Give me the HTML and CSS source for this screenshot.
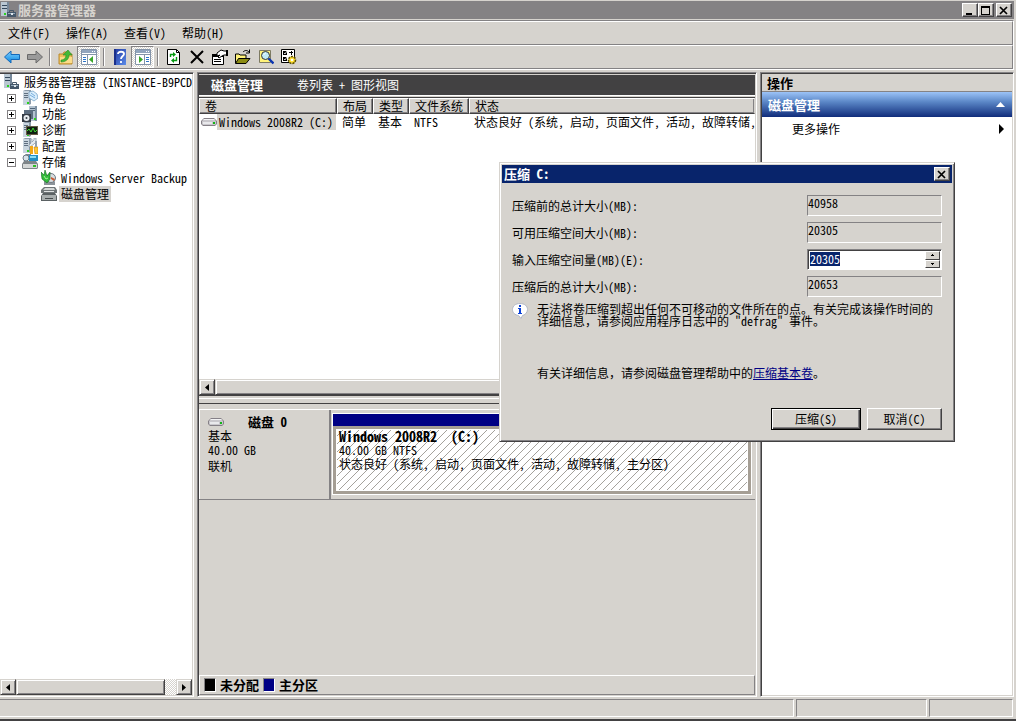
FILE: index.html
```html
<!DOCTYPE html>
<html lang="zh-CN">
<head>
<meta charset="utf-8">
<title>服务器管理器</title>
<link rel="stylesheet" href="styles.css">
</head>
<body>
<svg class="defs" aria-hidden="true">
  <defs>
    <linearGradient id="g-blue" x1="0" y1="0" x2="0" y2="1"><stop offset="0" stop-color="#7fd0ff"/><stop offset="1" stop-color="#0a86e0"/></linearGradient>
    <linearGradient id="g-help" x1="0" y1="0" x2="1" y2="1"><stop offset="0" stop-color="#2138a0"/><stop offset="1" stop-color="#5b8be8"/></linearGradient>
    <symbol id="tower" viewBox="0 0 16 16">
      <path d="M1 1l2-1h6v14l-2 1H1z" fill="#8d9cab"/><path d="M1 1h6v14H1z" fill="#c9d5df"/>
      <path d="M2 3.500h4M2 5.500h4M2 7.500h4" stroke="#5f6f80"/><path d="M5 12h2v2H5z" fill="#29d21d"/>
    </symbol>
    <symbol id="server" viewBox="0 0 16 16">
      <path d="M1 0h7v14H1z" fill="#b9c7d2"/><path d="M7 0h2v14H7z" fill="#76889a"/>
      <path d="M2 3.500h5M2 6.500h5" stroke="#33475b"/><path d="M4 11h2v2H4z" fill="#29d21d"/>
      <path d="M7 10h9v5H7z" fill="#45586b"/><path d="M8 11h7v1H8z" fill="#93a9bb"/><path d="M9.500 10V8.500h4V10" fill="none" stroke="#45586b"/><path d="M11 11h2v2h-2z" fill="#dde6ec"/>
    </symbol>
    <symbol id="roles" viewBox="0 0 16 16">
      <use href="#tower"/><path d="M7 2l4-1 4 3 1 4-4 3-5-3z" fill="#d8edfb" stroke="#6d9cc2" stroke-width=".7"/><path d="M9 3l4 3M8 5l5 3" stroke="#77aede"/>
    </symbol>
    <symbol id="features" viewBox="0 0 16 16">
      <path d="M7 0h8v15H7z" fill="#b4c3d0"/><path d="M8 2.500h5M8 4.500h5" stroke="#506478"/><path d="M13 0h2v15h-2z" fill="#7e91a3"/>
      <path d="M2 4h9v9H2z" fill="#5d6e80"/><path d="M0 8h9v8H0z" fill="#343c46"/><circle cx="4.500" cy="12" r="3" fill="#e9eef2"/><circle cx="4.500" cy="12" r="1" fill="#343c46"/><path d="M12 12h2v2h-2z" fill="#29d21d"/>
    </symbol>
    <symbol id="diag" viewBox="0 0 16 16">
      <use href="#tower"/><path d="M4 4h12v9H4z" fill="#665c47"/><path d="M5 5h10v7H5z" fill="#102012"/><path d="M5 9l2-2 2 3 2-4 2 4 2-2" fill="none" stroke="#3ed632"/>
    </symbol>
    <symbol id="config" viewBox="0 0 16 16">
      <use href="#tower"/><path d="M8 1h2v3l2-2V0h2v4l-2 2-4 3H7V7l2-2z" fill="#e5ebef" stroke="#8293a2" stroke-width=".7"/><path d="M8 8h3v8H8z" fill="#f3a817"/><path d="M12 9h4v7h-3z" fill="#ffc82e" stroke="#c87d0a" stroke-width=".6"/><path d="M13 3h2v6h-2z" fill="#93a1ad"/>
    </symbol>
    <symbol id="storage" viewBox="0 0 16 16">
      <path d="M1 3l3-3h5v6H1z" fill="#7c8792"/><circle cx="4" cy="4" r="3" fill="#d7e2e9" stroke="#6b7984"/><path d="M7 1h9v6H7z" fill="#248fc4"/><path d="M8 2h6v2H8z" fill="#8cdcf6"/>
      <path d="M2 7h12l2 3v4l-1 1H1l-1-1v-4z" fill="#7e8588"/><path d="M1 10h14v4H1z" fill="#d4d7d6"/><path d="M11 11h3v2h-3z" fill="#2fc027"/>
    </symbol>
    <symbol id="backup" viewBox="0 0 16 16">
      <path d="M3 10h10l1 2v3H3z" fill="#8c9399"/><circle cx="10" cy="8" r="4.500" fill="#d7dde1" stroke="#6e7881"/><path d="M10 7l4 2-1 2-3-2z" fill="#c85b34"/>
      <path d="M0 2l3 3 1-5 2 6 3-4v7l-3 4-5-4z" fill="#31bd3a" stroke="#126c22" stroke-width=".6"/><path d="M3 6l2 3 2-1" fill="none" stroke="#a5f39a"/>
    </symbol>
    <symbol id="disks" viewBox="0 0 16 16">
      <path d="M3 1h11l2 3v3H0V4z" fill="#6f7577"/><path d="M4 2h9l1 2H2z" fill="#d3d6d6"/><path d="M2 7h12l2 3v5H0v-5z" fill="#5b6163"/><path d="M1 9h14v5H1z" fill="#a9aeae"/><path d="M3 5h10v1H3z" fill="#e1e3e3"/><path d="M4 12.500h8" stroke="#454a4c"/>
    </symbol>
    <symbol id="drive" viewBox="0 0 16 8">
      <path d="M3 0h10l3 3v3l-2 2H2L0 6V3z" fill="#858087"/><path d="M3 1h10l2 2v3l-1 1H2L1 6V3z" fill="#c9c7cc"/><path d="M3 1h10l1 1H2z" fill="#f3f3f4"/><path d="M2 4h9v2H2z" fill="#e9e9ec"/><path d="M12 4h2v2h-2z" fill="#12b616"/>
    </symbol>
    <symbol id="console" viewBox="0 0 16 16">
      <path d="M0 0h16v16H0z" fill="#fff"/><path d="M.5.5h15v15H.5z" fill="none" stroke="#8494a9"/><path d="M1 1h14v3H1z" fill="#91a4bd"/><path d="M11 2.500h1M13 2.500h1" stroke="#fff"/><path d="M1 5.500h14" stroke="#8494a9"/>
    </symbol>
    <symbol id="tri" viewBox="0 0 4 7"><path d="M4 0v7L0 3.500z"/></symbol>
  </defs>
</svg>

<div class="window">
  <header class="titlebar">
    <svg class="ico"><use href="#server"/></svg>
    <h1 class="titlebar-text">服务器管理器</h1>
    <div class="caption">
      <button class="cap" aria-label="最小化"><svg width="10" height="9"><path d="M1 7h6v2H1z"/></svg></button>
      <button class="cap" aria-label="最大化"><svg width="10" height="9"><path d="M0 0h9v9H0zM1 2v6h7V2z" fill-rule="evenodd"/></svg></button>
      <button class="cap cap-close" aria-label="关闭"><svg width="10" height="9"><path d="M1 1l7 7M8 1L1 8" stroke="#000" stroke-width="1.700"/></svg></button>
    </div>
  </header>

  <div class="bars">
    <nav class="menubar">
      <button class="menu">文件(F)</button><button class="menu">操作(A)</button><button class="menu">查看(V)</button><button class="menu">帮助(H)</button>
    </nav>
    <div class="toolbar">
      <button class="tool" aria-label="后退"><svg class="ico" viewBox="0 0 16 16"><path d="M.5 8L7 2v3.500h8.500v5H7V14z" fill="url(#g-blue)" stroke="#1668b8"/></svg></button>
      <button class="tool" aria-label="前进"><svg class="ico" viewBox="0 0 16 16"><path d="M15.500 8L9 2v3.500H.5v5H9V14z" fill="#9a9a9a" stroke="#6a6a6a"/></svg></button>
      <span class="sep"></span>
      <button class="tool" aria-label="上一级"><svg class="ico" viewBox="0 0 16 16"><path d="M1 5h4l1-2h4l1 2h3v10H1z" fill="#f0c15c" stroke="#b98a2c"/><path d="M2 8h12v6H2z" fill="#fbdc8a"/><path d="M3 11c3 0 5-2 5-5H5l5-5 4 5h-3c0 4-3 7-8 7z" fill="#43b936" stroke="#2a8a26" stroke-width=".6"/></svg></button>
      <button class="tool tool-on" aria-label="显示/隐藏控制台树"><svg class="ico" viewBox="0 0 16 16"><use href="#console"/><path d="M6.500 6v9" stroke="#8494a9"/><path d="M2 8.500h3M2 10.500h3M2 12.500h3" stroke="#2d74c9"/><path d="M12 7v7l-4-3.500z" fill="#3aa62a"/></svg></button>
      <span class="sep"></span>
      <button class="tool" aria-label="帮助"><svg class="ico" viewBox="0 0 16 16"><path d="M2 0h12v16H2z" fill="url(#g-help)"/><path d="M2 0h2v16H2z" fill="#1b2f8a"/><path d="M6 5c0-3 6-3 6 0 0 2-3 2-3 5M9 12v2" fill="none" stroke="#fff" stroke-width="1.800"/></svg></button>
      <button class="tool tool-on" aria-label="显示/隐藏操作窗格"><svg class="ico" viewBox="0 0 16 16"><use href="#console"/><path d="M9.500 6v9" stroke="#8494a9"/><path d="M11 8.500h3M11 10.500h3M11 12.500h3" stroke="#2d74c9"/><path d="M4 7v7l4-3.500z" fill="#3aa62a"/></svg></button>
      <span class="sep"></span>
      <button class="tool" aria-label="刷新"><svg class="ico" viewBox="0 0 16 16"><path d="M1.500.5h9l3 3v12h-12z" fill="#fff" stroke="#000"/><path d="M10.500.5v3h3" fill="none" stroke="#000"/><path d="M4.500 8V5.500H8M10.500 8v3.500H7" fill="none" stroke="#079a12" stroke-width="1.400"/><path d="M7 3l3 2.500L7 8zM8 9l-3 2.500L8 14z" fill="#079a12"/></svg></button>
      <button class="tool" aria-label="删除"><svg class="ico" viewBox="0 0 16 16"><path d="M2 2l12 12M14 2L2 14" stroke="#000" stroke-width="2"/></svg></button>
      <button class="tool" aria-label="属性"><svg class="ico" viewBox="0 0 16 16"><path d="M.5 5.500h11v10H.5z" fill="#fff" stroke="#000"/><path d="M0 5h12v3H0z"/><path d="M2 10.500h7M2 12.500h7" stroke="#000"/><path d="M5 4l4-3 3 1h3v4h-3l-2 1-3 2-1-1 2-2-3 1z" fill="#fff" stroke="#000"/><path d="M14 1h2v6h-2z"/></svg></button>
      <button class="tool" aria-label="打开"><svg class="ico" viewBox="0 0 16 16"><path d="M.5 14V5H4l1 1h6v3" fill="#fff27a" stroke="#000"/><path d="M.5 14.500l3-5H15l-4 5z" fill="#8b8b12" stroke="#000"/><path d="M8 3c2-2 4-2 6 0M14.500.5V4H11" fill="none" stroke="#000"/></svg></button>
      <button class="tool" aria-label="重新扫描"><svg class="ico" viewBox="0 0 16 16"><path d="M1.500 1.500h11v12h-11z" fill="#fff27a" stroke="#7d7a62"/><circle cx="7.500" cy="6.500" r="4" fill="#bfeaf6" stroke="#333"/><path d="M5.500 6l2-2" stroke="#fff"/><path d="M10.500 9.500l5 5" stroke="#0b35b0" stroke-width="2.400"/></svg></button>
      <button class="tool" aria-label="设置"><svg class="ico" viewBox="0 0 16 16"><path d="M.5.5h13v13H.5z" fill="#fff" stroke="#000"/><path d="M2 2h4v4H2zM2 8h4v4H2z"/><path d="M3 4l1 1 2-3M3 10l1 1 2-3" stroke="#fff" fill="none" stroke-width=".8"/><path d="M8 3.500h4M10.500 2v4" stroke="#000"/><circle cx="11" cy="11" r="3.500" fill="#ffdf2e" stroke="#5a4c00" stroke-dasharray="2 1" stroke-width="1.600"/><circle cx="11" cy="11" r="1.300" fill="#fff"/></svg></button>
    </div>
  </div>

  <main class="panes">
    <aside class="pane pane-tree">
      <ul class="tree">
        <li class="node node-root"><svg class="ico"><use href="#server"/></svg><span class="node-text">服务器管理器 (INSTANCE-B9PCD</span></li>
        <li class="node"><button class="toggle toggle-plus" aria-label="展开"></button><svg class="ico"><use href="#roles"/></svg><span class="node-text">角色</span></li>
        <li class="node"><button class="toggle toggle-plus" aria-label="展开"></button><svg class="ico"><use href="#features"/></svg><span class="node-text">功能</span></li>
        <li class="node"><button class="toggle toggle-plus" aria-label="展开"></button><svg class="ico"><use href="#diag"/></svg><span class="node-text">诊断</span></li>
        <li class="node"><button class="toggle toggle-plus" aria-label="展开"></button><svg class="ico"><use href="#config"/></svg><span class="node-text">配置</span></li>
        <li class="node"><button class="toggle" aria-label="折叠"></button><svg class="ico"><use href="#storage"/></svg><span class="node-text">存储</span></li>
        <li class="node node-leaf"><svg class="ico"><use href="#backup"/></svg><span class="node-text">Windows Server Backup</span></li>
        <li class="node node-leaf"><svg class="ico"><use href="#disks"/></svg><span class="node-text node-selected">磁盘管理</span></li>
      </ul>
      <div class="scroll">
        <button class="scroll-btn" aria-label="向左"><svg width="4" height="7"><use href="#tri"/></svg></button>
        <div class="scroll-thumb scroll-thumb-tree"></div>
        <button class="scroll-btn scroll-end" aria-label="向右"><svg class="flip" width="4" height="7"><use href="#tri"/></svg></button>
      </div>
    </aside>

    <section class="pane pane-center">
      <div class="view-head"><h2 class="bold">磁盘管理</h2><span>卷列表 + 图形视图</span></div>
      <div class="volumes">
        <table class="vol-table">
          <colgroup><col class="c-vol"><col class="c-short"><col class="c-short"><col class="c-fs"><col></colgroup>
          <thead><tr><th>卷</th><th>布局</th><th>类型</th><th>文件系统</th><th>状态</th></tr></thead>
          <tbody><tr>
            <td class="vol-name"><div class="vol-cell"><svg class="drive"><use href="#drive"/></svg><span class="vol-label">Windows 2008R2 (C:)</span></div></td>
            <td>简单</td><td>基本</td><td>NTFS</td><td>状态良好 (系统, 启动, 页面文件, 活动, 故障转储,</td>
          </tr></tbody>
        </table>
        <div class="scroll scroll-list">
          <button class="scroll-btn" aria-label="向左"><svg width="4" height="7"><use href="#tri"/></svg></button>
          <div class="scroll-thumb scroll-thumb-full"></div>
        </div>
      </div>
      <div class="splitter"></div>
      <div class="graph">
        <div class="disk">
          <div class="disk-info">
            <div class="disk-title"><svg class="drive"><use href="#drive"/></svg><b class="bold">磁盘 0</b></div>
            <div>基本</div><div>40.00 GB</div><div class="disk-state">联机</div>
          </div>
          <div class="partition">
            <div class="part-bar"></div>
            <div class="part-body">
              <b class="part-name">Windows 2008R2&nbsp; (C:)</b>
              <div>40.00 GB NTFS</div>
              <div>状态良好 (系统, 启动, 页面文件, 活动, 故障转储, 主分区)</div>
            </div>
          </div>
        </div>
        <div class="legend bold">
          <span class="swatch swatch-black"></span><span class="legend-text">未分配</span>
          <span class="swatch swatch-navy"></span><span class="legend-text">主分区</span>
        </div>
      </div>
    </section>

    <aside class="pane pane-actions">
      <h2 class="act-head bold">操作</h2>
      <button class="act-group bold">磁盘管理<svg width="9" height="5"><path d="M4.500 0L9 5H0z" fill="#fff"/></svg></button>
      <button class="act-item">更多操作<svg width="5" height="10"><path d="M0 0l5 5-5 5z"/></svg></button>
    </aside>
  </main>

  <footer class="status"><div class="cell cell-main"></div><div class="cell cell-mid"></div><div class="cell cell-last"></div></footer>
</div>

<form class="dialog" role="dialog" aria-labelledby="dlg-title">
  <div class="dlg-title"><h2 class="bold" id="dlg-title">压缩 C:</h2><button type="button" class="cap" aria-label="关闭"><svg width="10" height="9"><path d="M1 1l7 7M8 1L1 8" stroke="#000" stroke-width="1.700"/></svg></button></div>
  <div class="dlg-body">
    <div class="fields">
      <label for="f1">压缩前的总计大小(MB):</label><input class="field" id="f1" readonly value="40958">
      <label for="f2">可用压缩空间大小(MB):</label><input class="field" id="f2" readonly value="20305">
      <label for="f3">输入压缩空间量(MB)(E):</label>
      <div class="spin"><input class="spin-input" id="f3" value="20305">
        <div class="spin-btns"><button type="button" class="spin-btn" aria-label="增加"><svg width="3" height="2"><path d="M1 0h1v1h1v1H0V1h1z"/></svg></button><button type="button" class="spin-btn" aria-label="减少"><svg width="3" height="2"><path d="M0 0h3v1H2v1H1V1H0z"/></svg></button></div>
      </div>
      <label for="f4">压缩后的总计大小(MB):</label><input class="field" id="f4" readonly value="20653">
    </div>
    <div class="info">
      <svg width="16" height="16" viewBox="0 0 16 16"><path d="M8 .5c4.500 0 7.500 2.500 7.500 6S12.500 12 10.500 12.500L9 15.500 6.500 12.500C3 12 .5 10 .5 6.500S3.500.5 8 .5z" fill="#fff" stroke="#b4b8c4"/><path d="M7 2h2v2H7zM6 5h3v5h1v1H6v-1h1V6H6z" fill="#0c41d8"/></svg>
      <p class="info-text">无法将卷压缩到超出任何不可移动的文件所在的点。有关完成该操作时间的<br>详细信息，请参阅应用程序日志中的<span class="half"> "defrag" </span>事件。</p>
    </div>
    <p class="more">有关详细信息，请参阅磁盘管理帮助中的<a class="link" href="#">压缩基本卷</a>。</p>
    <div class="buttons"><button type="button" class="btn btn-default">压缩(S)</button><button type="button" class="btn btn-cancel">取消(C)</button></div>
  </div>
</form>
<script src="app.js"></script>
</body>
</html>
```
FILE: styles.css
```css
:root {
  --face: #d6d3ce;
  --shade: #848284;
  --dark: #424142;
  --navy: #08246b;
}
* { box-sizing: border-box; }
body {
  margin: 0;
  background: var(--face);
  color: #000;
  font: 12px/16px "Noto Sans CJK SC", sans-serif;
  font-feature-settings: "hwid";
}
h1, h2, p, ul { margin: 0; padding: 0; font: inherit; font-feature-settings: inherit; }
button, input {
  font: inherit;
  font-feature-settings: inherit;
  color: inherit;
  margin: 0;
  padding: 0;
  border: 0;
  border-radius: 0;
  background: transparent;
}
svg { display: block; flex: none; }
.defs { position: absolute; width: 0; height: 0; }
.ico { width: 16px; height: 16px; }
.bold, h1.titlebar-text { font-weight: 700; font-size: 13px; }

.window {
  display: flex;
  flex-direction: column;
  height: 100vh;
  border-top: 1px solid var(--face);
  border-bottom: 2px solid var(--dark);
}
.titlebar {
  display: flex;
  align-items: center;
  flex: none;
  height: 18px;
  margin-right: 2px;
  background: var(--shade);
  color: var(--face);
}
.titlebar-text { margin-left: 2px; }
.caption { display: flex; margin-left: auto; margin-right: 2px; }
.cap {
  display: flex;
  align-items: center;
  justify-content: center;
  width: 16px;
  height: 14px;
  background: var(--face);
  border: 1px solid;
  border-color: #fff var(--dark) var(--dark) #fff;
  box-shadow: inset -1px -1px var(--shade);
}
.cap-close { margin-left: 2px; }

.bars {
  flex: none;
  margin: 1px 2px 2px 0;
  border: solid;
  border-width: 1px 1px 1px 0;
  border-color: var(--shade) #fff #fff;
}
.menubar {
  display: flex;
  height: 24px;
  border: solid;
  border-width: 1px 1px 1px 0;
  border-color: #fff var(--shade) var(--shade);
}
.menu { padding: 0 8px; }
.toolbar {
  display: flex;
  height: 24px;
  border: solid;
  border-width: 1px 1px 1px 0;
  border-color: #fff var(--shade) var(--shade);
}
.tool { display: flex; align-items: center; justify-content: center; width: 23px; height: 22px; }
.tool-on {
  border: 1px solid;
  border-color: var(--shade) #fff #fff var(--shade);
  background: repeating-conic-gradient(#fff 0 25%, var(--face) 0 50%) 0 0 / 2px 2px;
}
.sep { width: 8px; padding: 2px 3px; }
.sep::before { content: ""; display: block; width: 2px; height: 18px; background: linear-gradient(90deg, var(--shade) 50%, #fff 50%); }

.panes { display: flex; flex: 1; gap: 3px; min-height: 0; margin-right: 2px; }
.pane {
  display: flex;
  flex-direction: column;
  min-width: 0;
  border: 1px solid;
  border-color: var(--shade) #fff #fff var(--shade);
  box-shadow: inset 1px 1px var(--dark), inset -1px -1px var(--face);
  padding: 1px;
}
.pane-tree { flex: none; width: 194px; background: #fff; border-left: 0; padding-left: 0; box-shadow: inset 0 1px var(--dark), inset -1px -1px var(--face); }
.tree { flex: 1; list-style: none; overflow: hidden; }
.node { display: flex; align-items: center; height: 16px; padding-left: 7px; white-space: nowrap; }
.node-root { padding-left: 3px; }
.node-leaf { padding-left: 41px; }
.node-text { margin-left: 2px; padding: 0 2px; }
.node-root .node-text { margin-left: 3px; }
.node-selected { background: var(--face); }
.toggle {
  width: 9px;
  height: 9px;
  margin-right: 6px;
  border: 1px solid var(--shade);
  background: linear-gradient(#000, #000) center / 5px 1px no-repeat;
}
.toggle-plus { background: linear-gradient(#000, #000) center / 5px 1px no-repeat, linear-gradient(#000, #000) center / 1px 5px no-repeat; }

.scroll { display: flex; flex: none; height: 16px; background: repeating-conic-gradient(#fff 0 25%, var(--face) 0 50%) 0 0 / 2px 2px; }
.scroll-btn, .scroll-thumb {
  background: var(--face);
  border: 1px solid;
  border-color: var(--face) var(--dark) var(--dark) var(--face);
  box-shadow: inset 1px 1px #fff, inset -1px -1px var(--shade);
}
.scroll-btn { display: flex; align-items: center; justify-content: center; width: 16px; }
.scroll-thumb-tree { width: 149px; }
.scroll-thumb-full { flex: 1; }
.scroll-end { margin-left: auto; }
.flip { transform: scaleX(-1); }

.pane-center { flex: 1; padding-top: 2px; }
.view-head {
  display: flex;
  align-items: center;
  flex: none;
  gap: 34px;
  height: 21px;
  padding-left: 12px;
  background: var(--dark);
  border-bottom: 1px solid #fff;
  color: #fff;
}
.volumes {
  display: flex;
  flex-direction: column;
  flex: none;
  height: 300px;
  border-top: 1px solid var(--face);
  border-bottom: 1px solid var(--dark);
  background: #fff;
  overflow: hidden;
}
.vol-table { width: 100%; table-layout: fixed; border-collapse: separate; border-spacing: 0; border-top: 1px solid var(--dark); }
.c-vol { width: 138px; }
.c-short { width: 36px; }
.c-fs { width: 60px; }
.vol-table th {
  height: 16px;
  padding: 0 5px;
  background: var(--face);
  border: 1px solid;
  border-color: #fff var(--dark) var(--dark) #fff;
  box-shadow: inset -1px -1px var(--shade);
  font-weight: 400;
  line-height: 14px;
  text-align: left;
  white-space: nowrap;
}
.vol-table th:last-child { border-right-color: var(--face); }
.vol-table td { height: 16px; padding: 0 0 0 5px; white-space: nowrap; overflow: hidden; }
.vol-table .vol-name { padding: 0 1px 0 2px; }
.vol-cell { display: flex; align-items: center; }
.drive { width: 16px; height: 8px; }
.vol-label { flex: 1; padding-left: 2px; background: var(--face); }
.scroll-list { margin-top: auto; }
.splitter { flex: none; height: 8px; border-bottom: 1px solid var(--dark); box-shadow: inset 0 2px var(--face), inset 0 3px #fff; }

.graph { display: flex; flex-direction: column; flex: 1; min-height: 0; padding-top: 5px; }
.disk { display: flex; height: 91px; border-top: 1px solid #fff; border-bottom: 1px solid var(--shade); }
.disk-info {
  flex: none;
  width: 132px;
  padding: 4px 0 0 8px;
  border: solid;
  border-width: 0 2px 0 1px;
  border-color: #fff var(--shade) #fff #fff;
  line-height: 14px;
}
.disk-title { display: flex; align-items: center; gap: 24px; height: 15px; }
.disk-state { line-height: 18px; }
.partition { flex: 1; min-width: 0; display: flex; flex-direction: column; margin: 3px 3px 4px 1px; border: 1px solid #fff; }
.part-bar { height: 12px; background: #000084; }
.part-body {
  flex: 1;
  padding: 0 3px;
  border: 3px solid #a59e94;
  box-shadow: inset 0 0 0 1px #fff;
  background: linear-gradient(135deg, transparent 46%, #a5a29c 46%, #a5a29c 54%, transparent 54%) 0 0 / 8px 8px #fff;
  line-height: 14px;
  white-space: nowrap;
  overflow: hidden;
}
.part-name { display: block; font-size: 14px; }
.legend {
  display: flex;
  align-items: center;
  height: 20px;
  margin-top: auto;
  padding-left: 4px;
  border: 1px solid;
  border-color: #fff var(--shade) var(--shade) #fff;
}
.swatch { width: 12px; height: 14px; border: 1px solid; border-color: var(--shade) #fff #fff var(--shade); }
.swatch-black { background: #000; }
.swatch-navy { background: #000084; }
.legend-text { padding: 0 4px; }

.pane-actions { flex: none; width: 254px; background: #fff; }
.act-head { height: 18px; padding-left: 5px; background: var(--face); border-bottom: 1px solid var(--shade); line-height: 18px; }
.act-group, .act-item { display: flex; align-items: center; justify-content: space-between; text-align: left; }
.act-group { height: 25px; padding: 0 7px 0 6px; background: linear-gradient(#9cc3f7, #5a86c6 40%, #102c7b); color: #fff; }
.act-item { height: 23px; padding: 0 8px 0 30px; }

.status { display: flex; flex: none; gap: 2px; height: 18px; margin: 2px 3px 2px 0; }
.cell { border: 1px solid; border-color: var(--shade) #fff #fff var(--shade); }
.cell-main { flex: 1; border-left: 0; }
.cell-mid { width: 131px; }
.cell-last { width: 84px; }

.dialog {
  position: absolute;
  left: 499px;
  top: 162px;
  width: 456px;
  background: var(--face);
  border: 1px solid;
  border-color: var(--face) var(--dark) var(--dark) var(--face);
  box-shadow: inset 1px 1px #fff, inset -1px -1px var(--shade);
  padding: 2px;
}
.dlg-title { display: flex; align-items: center; justify-content: space-between; height: 18px; padding: 0 2px; background: var(--navy); color: #fff; }
.dlg-title .cap { color: #000; }
.dlg-body { padding: 12px 10px 9px; }
.fields { display: grid; grid-template-columns: 1fr 135px; gap: 6px 0; align-items: center; }
.field {
  width: 100%;
  height: 21px;
  padding-bottom: 7px;
  border: 1px solid;
  border-color: var(--shade) #fff #fff var(--shade);
  line-height: 12px;
}
.spin {
  display: flex;
  height: 21px;
  background: #fff;
  border: 1px solid;
  border-color: var(--shade) #fff #fff var(--shade);
  box-shadow: inset 1px 1px var(--dark);
  padding: 1px;
}
.spin-input { flex: 1; min-width: 0; padding: 0 0 2px 1px; outline: 0; line-height: 14px; }
.spin-input::selection { background: var(--navy); color: #fff; }
.spin-btns { display: flex; flex-direction: column; width: 15px; }
.spin-btn {
  display: flex;
  flex: 1;
  align-items: center;
  justify-content: center;
  background: var(--face);
  border: 1px solid;
  border-color: #fff var(--dark) var(--dark) #fff;
}
.info { display: flex; gap: 9px; height: 56px; margin-top: 6px; }
.info-text, .more { font-feature-settings: normal; }
.half { font-feature-settings: "hwid"; }
.info-text { line-height: 12px; white-space: nowrap; }
.more { margin-top: 6px; padding-left: 25px; }
.link { color: #000084; text-decoration: underline; }
.buttons { display: flex; justify-content: flex-end; gap: 6px; margin-top: 27px; }
.btn {
  height: 22px;
  border: 1px solid;
  border-color: #fff var(--dark) var(--dark) #fff;
  box-shadow: inset -1px -1px var(--shade);
}
.btn-default { width: 90px; border-color: #000; box-shadow: inset 1px 1px #fff, inset -1px -1px var(--dark), inset -2px -2px var(--shade); }
.btn-cancel { width: 75px; }
```
FILE: app.js
```js
const size = document.getElementById("f3");
size.focus();
size.select();
```
